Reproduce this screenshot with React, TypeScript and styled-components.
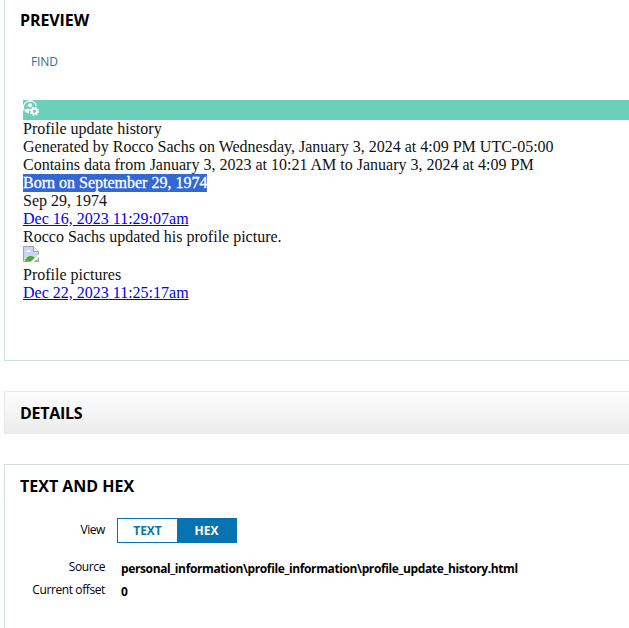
import React from "react";
import styled, { createGlobalStyle } from "styled-components";

const GlobalStyle = createGlobalStyle`
  html, body { margin: 0; background: #fff; overflow: hidden; }
  * { box-sizing: border-box; }
`;

const Page = styled.main`
  display: flex;
  flex-direction: column;
  gap: 30px;
  height: 628px;
  padding-left: 4px;
  overflow: hidden;
  color: #000;
  font-family: "Open Sans", "Noto Sans", sans-serif;
`;

const PreviewPanel = styled.section`
  flex: none;
  height: 361px;
  padding: 10px 0 0 15px;
  border: solid #d3dde6;
  border-width: 0 0 1px 1px;
`;

const DetailsPanel = styled.section`
  flex: none;
  height: 43px;
  padding: 11px 0 0 15px;
  border: solid #e9e9e9;
  border-width: 1px 0 0 1px;
  background: linear-gradient(#fdfdfd, #ececec);
`;

const HexPanel = styled.section`
  flex: 1;
  padding: 11px 0 0 15px;
  border: solid #d3dde6;
  border-width: 1px 0 0 1px;
`;

const Title = styled.h2<{ $spacing: number }>`
  margin: 0;
  font-size: 16px;
  font-weight: 700;
  line-height: 20px;
  letter-spacing: ${(p) => p.$spacing}px;
`;

const FindButton = styled.button`
  display: block;
  margin: 22px 0 0 11px;
  padding: 0;
  border: 0;
  background: none;
  color: #2e6da4;
  font: 12px/20px "Open Sans", sans-serif;
  letter-spacing: -0.15px;
`;

const Document = styled.article`
  margin: 28px 0 0 3px;
  color: #111;
  font: 16px/18px "Liberation Serif", "Times New Roman", serif;
  white-space: nowrap;
`;

const Banner = styled.div`
  height: 20px;
  background: #6bcfba;
  svg { display: block; }
`;

const Line = styled.div`
  height: 18px;
`;

const Selection = styled.span`
  display: inline-block;
  height: 18px;
  background: #3367d1;
  color: #fff;
  -webkit-text-stroke: 0.3px #fff;
`;

const DateLink = styled.a`
  color: #0000ee;
  text-decoration: underline;
`;

const ImageRow = styled.div`
  height: 20px;
  svg { display: block; }
`;

const Field = styled.div<{ $top: number; $height: number; $gap: number }>`
  display: flex;
  align-items: flex-start;
  gap: ${(p) => p.$gap}px;
  height: ${(p) => p.$height}px;
  margin-top: ${(p) => p.$top}px;
`;

const Label = styled.span<{ $top?: number }>`
  width: 85px;
  padding-top: ${(p) => p.$top ?? 0}px;
  font-size: 12px;
  line-height: 16px;
  text-align: right;
  white-space: nowrap;
  letter-spacing: -0.4px;
`;

const Value = styled.strong`
  padding-top: 2px;
  font-size: 12px;
  line-height: 16px;
  letter-spacing: -0.38px;
`;

const Toggle = styled.div`
  display: flex;
  width: 120px;
  height: 25px;
  border: 1px solid #0873b1;
`;

const ToggleOption = styled.button<{ $active?: boolean }>`
  flex: 1 0 59px;
  padding: 0;
  border: 0;
  background: ${(p) => (p.$active ? "#0873b1" : "#fff")};
  color: ${(p) => (p.$active ? "#fff" : "#0873b1")};
  font: 700 12px/23px "Open Sans", sans-serif;
`;

const ProfileGearIcon = () => (
  <svg width="16" height="16" viewBox="0 0 16 16" fill="none">
    <path d="M1.2 10.5A6.6 6.6 0 1 1 13.4 5.7" stroke="#fff" strokeWidth="1.3" />
    <circle cx="7" cy="5.3" r="2.1" fill="#fff" />
    <path d="M1.5 10.2C3 8.8 5 8.6 6.6 9L6 13.5C4 13.4 2.2 12 1.5 10.2Z" fill="#fff" />
    <circle cx="11.4" cy="11.2" r="2.6" stroke="#fff" strokeWidth="2" />
    <circle cx="11.4" cy="11.2" r="4" stroke="#fff" strokeWidth="1.4" strokeDasharray="1.57 1.57" />
  </svg>
);

const BrokenImageIcon = () => (
  <svg width="16" height="16" viewBox="0 0 16 16">
    <path d="M.5.5H10.5L15.5 5.5V15.5H.5Z" fill="#c3d7f4" stroke="#a2a2a2" />
    <path d="M3 6C3 4.8 4 4.5 4.6 4.8C5 3.6 7 3.8 7 5C8 5 8 6 8 6Z" fill="#fff" />
    <path d="M2 15C3.5 11 6 9.5 8 10C10 9.8 12 11.5 14 15Z" fill="#56a832" />
    <path d="M10.5.5V5.5H15.5" fill="#f5f5f5" stroke="#a2a2a2" />
    <path d="M7.5 16L16 8V11L11 16Z" fill="#fff" />
  </svg>
);

export default function App() {
  return (
    <>
      <GlobalStyle />
      <Page>
        <PreviewPanel>
          <Title $spacing={-0.1}>PREVIEW</Title>
          <FindButton>FIND</FindButton>
          <Document>
            <Banner><ProfileGearIcon /></Banner>
            <Line>Profile update history</Line>
            <Line>Generated by Rocco Sachs on Wednesday, January 3, 2024 at 4:09 PM UTC-05:00</Line>
            <Line>Contains data from January 3, 2023 at 10:21 AM to January 3, 2024 at 4:09 PM</Line>
            <Line><Selection>Born on September 29, 1974</Selection></Line>
            <Line>Sep 29, 1974</Line>
            <Line><DateLink>Dec 16, 2023 11:29:07am</DateLink></Line>
            <Line>Rocco Sachs updated his profile picture.</Line>
            <ImageRow><BrokenImageIcon /></ImageRow>
            <Line>Profile pictures</Line>
            <Line><DateLink>Dec 22, 2023 11:25:17am</DateLink></Line>
          </Document>
        </PreviewPanel>
        <DetailsPanel>
          <Title $spacing={-0.3}>DETAILS</Title>
        </DetailsPanel>
        <HexPanel>
          <Title $spacing={0}>TEXT AND HEX</Title>
          <Field $top={22} $height={25} $gap={12}>
            <Label $top={4}>View</Label>
            <Toggle>
              <ToggleOption>TEXT</ToggleOption>
              <ToggleOption $active>HEX</ToggleOption>
            </Toggle>
          </Field>
          <Field $top={16} $height={23} $gap={16}>
            <Label>Source</Label>
            <Value>personal_information\profile_information\profile_update_history.html</Value>
          </Field>
          <Field $top={0} $height={23} $gap={16}>
            <Label>Current offset</Label>
            <Value>0</Value>
          </Field>
        </HexPanel>
      </Page>
    </>
  );
}
